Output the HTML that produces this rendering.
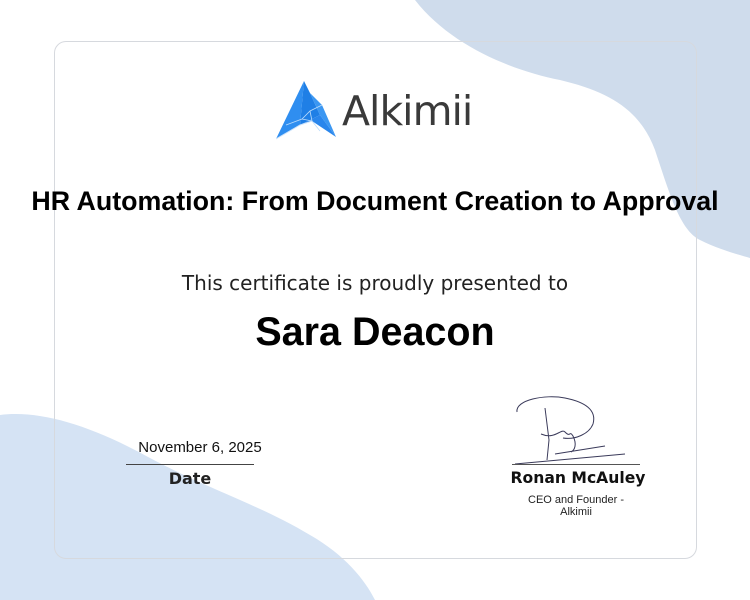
<!DOCTYPE html>
<html><head><style>
body{margin:0;width:750px;height:600px;overflow:hidden;background:#fff;position:relative;font-family:"Liberation Sans",sans-serif}
svg.bg{position:absolute;left:0;top:0}
.card{position:absolute;left:54px;top:41px;width:643px;height:518px;border:1.5px solid #d6d9de;border-radius:12px;box-sizing:border-box}
.t{position:absolute;left:0;width:750px;text-align:center;color:#000}
</style></head><body>
<svg class="bg" width="750" height="600">
<path d="M415 0 C450 45 510 70 560 80 C610 92 640 110 655 150 C670 195 680 230 700 240 C720 250 740 255 750 258 L750 0 Z" fill="#cfdcec"/>
<path d="M0 415 C40 410 90 425 150 458 C210 490 260 505 310 535 C345 555 365 580 375 600 L0 600 Z" fill="#d5e3f4"/>
</svg>
<div class="card"></div>
<svg style="position:absolute;left:276px;top:81px" width="64" height="60" viewBox="0 0 64 60">
<path d="M28 0 L0 58 L24 44 Z" fill="#2f8ef0"/>
<path d="M28 0 L24 44 L44 34 L34 12 Z" fill="#1f7fe6"/>
<path d="M34 12 L44 34 L60 56 L46 24 Z" fill="#3b97f2"/>
<path d="M24 44 L44 34 L60 56 L36 40 Z" fill="#2a86ec"/>
<path d="M0 58 L24 44 L36 40" stroke="#cfe4fb" stroke-width="1" fill="none"/>
<path d="M10 44 L26 38 L34 30 L46 24 M26 38 L36 40 L44 50 M34 30 L36 40" stroke="#bcdcfb" stroke-width="0.8" fill="none"/>
</svg>
<div style="position:absolute;top:87px;left:342px;font-size:41px;color:#3a3a3a;font-family:'DejaVu Sans',sans-serif;letter-spacing:-1px">Alkimii</div>
<div class="t" style="top:186px;font-size:26.8px;font-weight:bold">HR Automation: From Document Creation to Approval</div>
<div class="t" style="top:271px;color:#222;font-family:'DejaVu Sans',sans-serif;font-size:20px">This certificate is proudly presented to</div>
<div class="t" style="top:310px;font-size:39.5px;font-weight:bold">Sara Deacon</div>
<div style="position:absolute;left:130px;top:439px;width:140px;text-align:center;font-size:15px;color:#111">November 6, 2025</div>
<div style="position:absolute;left:126px;top:464px;width:128px;border-top:1px solid #444"></div>
<div style="position:absolute;left:126px;top:469px;width:128px;text-align:center;font-size:16px;font-weight:bold;color:#222;font-family:'DejaVu Sans',sans-serif">Date</div>
<svg style="position:absolute;left:505px;top:390px" width="140" height="80" viewBox="0 0 140 80">
<path d="M12 22 C10 10 40 4 60 8 C80 12 92 20 88 34 C84 44 70 50 58 48 M40 18 L44 50 L42 70 M36 44 C50 50 56 38 60 42 C66 48 64 40 68 46 C72 54 70 60 66 62 M50 64 L100 56 M10 74 L120 64" stroke="#3a3a5a" stroke-width="1" fill="none"/>
</svg>
<div style="position:absolute;left:512px;top:464px;width:128px;border-top:1px solid #555"></div>
<div style="position:absolute;left:502px;top:469px;width:152px;text-align:center;font-size:15.6px;font-weight:bold;color:#111;font-family:'DejaVu Sans',sans-serif">Ronan McAuley</div>
<div style="position:absolute;left:500px;top:494px;width:152px;text-align:center;font-size:11px;color:#222;line-height:12px">CEO and Founder -<br>Alkimii</div>
</body></html>
